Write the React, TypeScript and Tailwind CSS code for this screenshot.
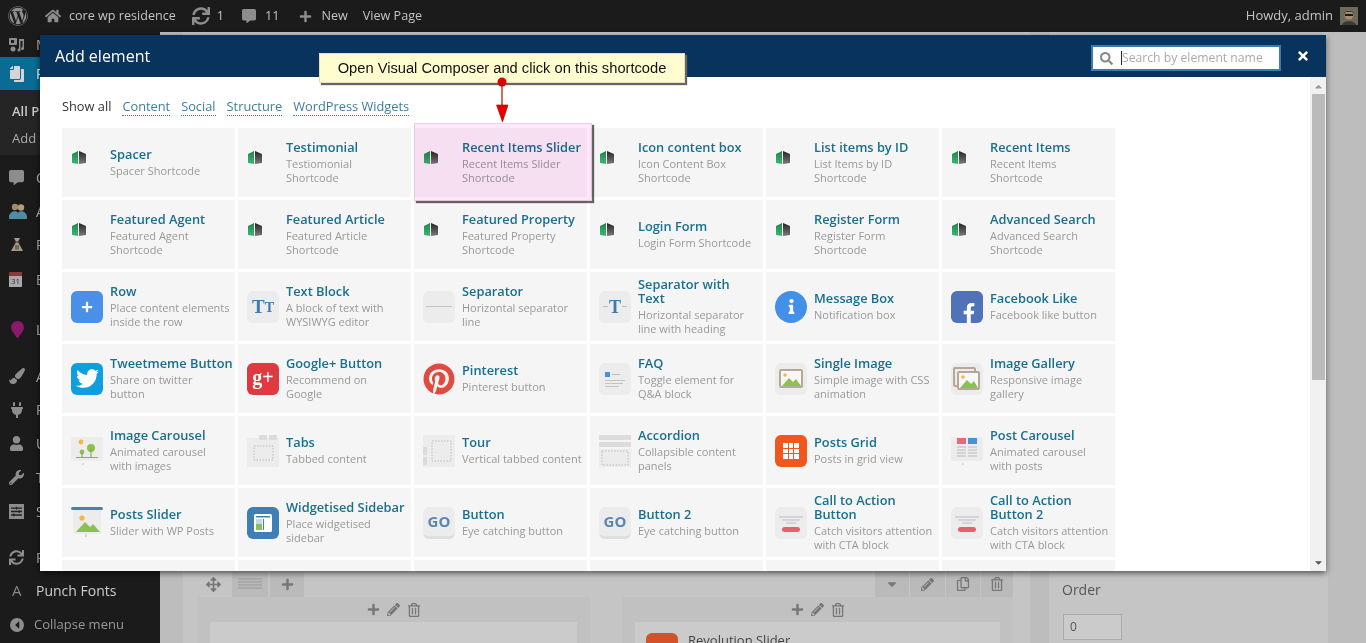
import React from 'react';
import {
  FaWordpress, FaHome, FaSync, FaPlus, FaCopy, FaCommentAlt, FaPaintBrush, FaPlug, FaUser,
  FaWrench, FaTwitter, FaPinterest, FaFacebookF, FaInfo, FaSearch, FaTimes, FaArrowsAlt,
  FaPencilAlt, FaRegTrashAlt, FaRegCopy, FaCaretDown, FaCaretLeft, FaCaretUp, FaMapMarker, FaSlidersH,
} from 'react-icons/fa';

const tile = 'w-[32px] h-[32px] rounded-[6px] flex items-center justify-center shrink-0';

const Shortcode = () => (
  <div className="w-[32px] h-[32px] shrink-0 pt-[4px]">
    <svg width="16" height="13" viewBox="0 0 16 13">
      <defs>
        <linearGradient id="sg" x1="0" y1="0" x2="0" y2="1">
          <stop offset="0" stopColor="#1a8a4a" />
          <stop offset="1" stopColor="#3fb574" />
        </linearGradient>
        <linearGradient id="sd" x1="0" y1="0" x2="0" y2="1">
          <stop offset="0" stopColor="#262626" />
          <stop offset="1" stopColor="#7a7a7a" />
        </linearGradient>
      </defs>
      <polygon points="1,3 7,0 7,13 1,12" fill="url(#sg)" />
      <polygon points="8,0 15,3 15,12 8,13" fill="url(#sd)" />
    </svg>
  </div>
);

const GreyImage = () => (
  <>
    <rect x="5" y="7" width="22" height="17" fill="#f7f7f7" stroke="#b5a898" strokeWidth="2" rx="1" />
    <circle cx="10" cy="12" r="1.8" fill="#f5b83d" />
    <polygon points="7,23 14,15 18,19 21,16 26,23" fill="#8cc152" />
  </>
);

const Svg = ({ children }: { children: React.ReactNode }) => (
  <svg width="32" height="32" viewBox="0 0 32 32">{children}</svg>
);

const icons: Record<string, React.ReactNode> = {
  code: <Shortcode />,
  row: <div className={`${tile} bg-[#4a90e9] text-white`}><FaPlus size={12} /></div>,
  text: (
    <div className={`${tile} bg-[#ececec] text-[#4079ad] font-['Liberation_Serif',serif] font-bold leading-none`}>
      <span className="text-[19px]">T</span><span className="text-[14px] mt-[3px]">T</span>
    </div>
  ),
  sep: (
    <div className={`${tile} bg-[#ececec]`}>
      <div className="w-[26px] h-px bg-[#c4c4c4]" />
    </div>
  ),
  septext: (
    <div className={`${tile} bg-[#ececec] gap-[1px]`}>
      <div className="w-[5px] h-px bg-[#bbb]" />
      <span className="text-[#4079ad] font-['Liberation_Serif',serif] font-bold text-[18px] leading-none">T</span>
      <div className="w-[5px] h-px bg-[#bbb]" />
    </div>
  ),
  message: <div className={`${tile} !rounded-full bg-[#4290e8] text-white`}><FaInfo size={15} /></div>,
  facebook: <div className={`${tile} bg-[#5072b8] text-white items-end`}><FaFacebookF size={20} className="translate-x-[2px]" /></div>,
  twitter: <div className={`${tile} bg-[#0f9fdf] text-white`}><FaTwitter size={23} /></div>,
  google: (
    <div className={`${tile} bg-[#dd3b3f] text-white font-['Liberation_Serif',serif] font-bold text-[20px] leading-none pb-[3px]`}>g+</div>
  ),
  pinterest: <div className="w-[32px] h-[32px] flex items-center justify-center shrink-0 text-[#df4b3f]"><FaPinterest size={32} /></div>,
  faq: (
    <div className={`${tile} bg-[#ececec]`}>
      <Svg>
        <rect x="6" y="9" width="5" height="5" fill="#4a90e2" />
        <rect x="13" y="11" width="8" height="1" fill="#bbb" />
        <rect x="6" y="17" width="20" height="1" fill="#c4c4c4" />
        <rect x="6" y="20" width="18" height="1" fill="#c4c4c4" />
        <rect x="6" y="23" width="14" height="1" fill="#c4c4c4" />
      </Svg>
    </div>
  ),
  image: <div className={`${tile} bg-[#ececec]`}><Svg><GreyImage /></Svg></div>,
  gallery: (
    <div className={`${tile} bg-[#ececec]`}>
      <Svg>
        <rect x="3" y="5" width="21" height="18" fill="none" stroke="#b5a898" strokeWidth="2" rx="1" />
        <rect x="7" y="9" width="21" height="17" fill="#f7f7f7" stroke="#b5a898" strokeWidth="2" rx="1" />
        <circle cx="12" cy="14" r="1.8" fill="#f5b83d" />
        <polygon points="9,25 16,17 20,21 23,18 27,25" fill="#8cc152" />
      </Svg>
    </div>
  ),
  carousel: (
    <Svg>
      <rect x="0" y="2" width="32" height="24" rx="3" fill="#ececec" />
      <circle cx="10" cy="7" r="2.4" fill="#f5b83d" />
      <circle cx="20" cy="13" r="4" fill="#8cc152" />
      <rect x="19.5" y="14" width="1" height="8" fill="#6fa93a" />
      <circle cx="11" cy="17" r="2.4" fill="#8cc152" />
      <rect x="10.5" y="18" width="1" height="4" fill="#6fa93a" />
      <rect x="5" y="22" width="22" height="1" fill="#999" />
      <circle cx="12" cy="29" r="0.8" fill="#bbb" />
    </Svg>
  ),
  tabs: (
    <Svg>
      <rect x="0" y="3" width="32" height="29" fill="#ececec" />
      <rect x="12" y="0" width="8" height="5" rx="1" fill="#dcdcdc" />
      <rect x="22" y="0" width="8" height="5" rx="1" fill="#dcdcdc" />
      <rect x="7" y="11" width="19" height="14" fill="none" stroke="#bbb" strokeDasharray="1.5 1.5" />
    </Svg>
  ),
  tour: (
    <Svg>
      <rect x="0" y="0" width="32" height="32" fill="#ececec" />
      <rect x="0" y="12" width="4" height="8" fill="#dcdcdc" />
      <rect x="0" y="22" width="4" height="8" fill="#dcdcdc" />
      <rect x="9" y="6" width="19" height="20" fill="none" stroke="#bbb" strokeDasharray="1.5 1.5" />
    </Svg>
  ),
  accordion: (
    <Svg>
      <rect x="0" y="0" width="32" height="5" fill="#dcdcdc" />
      <rect x="0" y="7" width="32" height="5" fill="#dcdcdc" />
      <rect x="0" y="14" width="32" height="18" fill="#ececec" />
      <rect x="3" y="16" width="26" height="14" fill="none" stroke="#bbb" strokeDasharray="1.5 1.5" />
    </Svg>
  ),
  grid: (
    <div className={`${tile} bg-[#f1561f]`}>
      <Svg>
        <rect x="8" y="8" width="16" height="16" fill="#fff" />
        <path d="M8 13.5h16M8 18.5h16M13.5 8v16M18.5 8v16" stroke="#f1561f" strokeWidth="1" />
      </Svg>
    </div>
  ),
  postcarousel: (
    <Svg>
      <rect x="0" y="2" width="32" height="24" rx="2" fill="#ececec" />
      <rect x="6" y="3" width="9" height="6" fill="#e8697a" />
      <rect x="17" y="3" width="9" height="6" fill="#4a90e2" />
      <path d="M6 12h9M6 15h9M6 18h9M6 21h9M17 12h9M17 15h9M17 18h9M17 21h9" stroke="#bbb" />
      <circle cx="12" cy="29" r="0.8" fill="#bbb" />
    </Svg>
  ),
  slider: (
    <Svg>
      <rect x="0" y="0" width="32" height="3" rx="1.5" fill="#4a7fb0" />
      <rect x="2" y="3" width="28" height="24" fill="#ececec" />
      <circle cx="11" cy="11" r="2.6" fill="#f5b83d" />
      <polygon points="5,25 14,15 19,20 22,17 29,25" fill="#8cc152" />
      <path d="M15 27v3" stroke="#bbb" />
    </Svg>
  ),
  widget: (
    <div className={`${tile} bg-[#3f7fb5]`}>
      <Svg>
        <rect x="7" y="7" width="18" height="18" rx="1.5" fill="#fff" />
        <rect x="9" y="17" width="6" height="6" fill="#8cc152" />
        <rect x="9" y="12" width="6" height="5" fill="#3f7fb5" opacity="0.3" />
        <rect x="9" y="9" width="14" height="1.5" fill="#3f7fb5" />
        <rect x="16" y="12" width="1" height="11" fill="#3f7fb5" />
      </Svg>
    </div>
  ),
  go: (
    <div className={`${tile} bg-[#ececec] border-b-[3px] border-[#dedede] text-[#5a86b3] font-['Open_Sans',sans-serif] font-bold text-[15px]`}>GO</div>
  ),
  cta: (
    <div className={`${tile} bg-[#ececec]`}>
      <Svg>
        <path d="M4 10h24M7 13h18M11 16h10" stroke="#bbb" />
        <rect x="7" y="20" width="18" height="5" rx="2.5" fill="#e8606a" />
      </Svg>
    </div>
  ),
};

const items = [
  ['code', 'Spacer', 'Spacer Shortcode'],
  ['code', 'Testimonial', 'Testiomonial\nShortcode'],
  ['code', 'Recent Items Slider', 'Recent Items Slider\nShortcode'],
  ['code', 'Icon content box', 'Icon Content Box\nShortcode'],
  ['code', 'List items by ID', 'List Items by ID\nShortcode'],
  ['code', 'Recent Items', 'Recent Items\nShortcode'],
  ['code', 'Featured Agent', 'Featured Agent\nShortcode'],
  ['code', 'Featured Article', 'Featured Article\nShortcode'],
  ['code', 'Featured Property', 'Featured Property\nShortcode'],
  ['code', 'Login Form', 'Login Form Shortcode'],
  ['code', 'Register Form', 'Register Form\nShortcode'],
  ['code', 'Advanced Search', 'Advanced Search\nShortcode'],
  ['row', 'Row', 'Place content elements\ninside the row'],
  ['text', 'Text Block', 'A block of text with\nWYSIWYG editor'],
  ['sep', 'Separator', 'Horizontal separator\nline'],
  ['septext', 'Separator with\nText', 'Horizontal separator\nline with heading'],
  ['message', 'Message Box', 'Notification box'],
  ['facebook', 'Facebook Like', 'Facebook like button'],
  ['twitter', 'Tweetmeme Button', 'Share on twitter\nbutton'],
  ['google', 'Google+ Button', 'Recommend on\nGoogle'],
  ['pinterest', 'Pinterest', 'Pinterest button'],
  ['faq', 'FAQ', 'Toggle element for\nQ&A block'],
  ['image', 'Single Image', 'Simple image with CSS\nanimation'],
  ['gallery', 'Image Gallery', 'Responsive image\ngallery'],
  ['carousel', 'Image Carousel', 'Animated carousel\nwith images'],
  ['tabs', 'Tabs', 'Tabbed content'],
  ['tour', 'Tour', 'Vertical tabbed content'],
  ['accordion', 'Accordion', 'Collapsible content\npanels'],
  ['grid', 'Posts Grid', 'Posts in grid view'],
  ['postcarousel', 'Post Carousel', 'Animated carousel\nwith posts'],
  ['slider', 'Posts Slider', 'Slider with WP Posts'],
  ['widget', 'Widgetised Sidebar', 'Place widgetised\nsidebar'],
  ['go', 'Button', 'Eye catching button'],
  ['go', 'Button 2', 'Eye catching button'],
  ['cta', 'Call to Action\nButton', 'Catch visitors attention\nwith CTA block'],
  ['cta', 'Call to Action\nButton 2', 'Catch visitors attention\nwith CTA block'],
];

const ElementCard = ({ icon, title, desc }: { icon: string; title: string; desc: string }) => (
  <div className="h-[69px] bg-[#f5f5f5] flex items-center pl-[9px] gap-[7px]">
    {icons[icon]}
    <div className="min-w-0">
      <div className="text-[12.8px] leading-[14px] font-semibold text-[#17708f] whitespace-pre-line">{title}</div>
      <div className="mt-[3px] text-[11px] leading-[14px] text-[#999] whitespace-pre-line">{desc}</div>
    </div>
  </div>
);

const SideIcon = ({ children }: { children: React.ReactNode }) => (
  <div className="w-[36px] pl-[9px] shrink-0 flex items-center text-[#8d8d8d]">{children}</div>
);

const sideItems: { h: string; label: React.ReactNode; icon: React.ReactNode }[] = [
  { h: 'h-[34px]', label: 'Comments', icon: <FaCommentAlt size={15} /> },
  {
    h: 'h-[34px]',
    label: 'Agents',
    icon: (
      <svg width="18" height="16" viewBox="0 0 18 16">
        <circle cx="6" cy="4" r="3.2" fill="#a08a6a" />
        <circle cx="12" cy="4.5" r="3.2" fill="#b59c78" />
        <path d="M0 14c0-6 8-7 9-4 1-3 9-2 9 4v2H0z" fill="#4f8ba3" />
      </svg>
    ),
  },
  {
    h: 'h-[33px]',
    label: 'Properties',
    icon: (
      <svg width="16" height="16" viewBox="0 0 16 16">
        <path d="M5 1h6l-2 4 5 9H2l5-9z" fill="#a89a84" />
        <path d="M5 5h6" stroke="#333" />
        <path d="M6 9h4M6 11h4M7 8v5M9 8v5" stroke="#444" strokeWidth="0.7" />
      </svg>
    ),
  },
  {
    h: 'h-[36px]',
    label: 'Bookings',
    icon: (
      <div className="w-[13px] h-[15px] bg-[#aaa] border-t-[4px] border-[#8b3a3a] text-[#333] text-[8px] leading-[10px] text-center">31</div>
    ),
  },
  { h: 'h-[34px] mt-[15px]', label: 'Locations', icon: <FaMapMarker size={17} className="text-[#8c1a6a]" /> },
  { h: 'h-[34px] mt-[13px]', label: 'Appearance', icon: <FaPaintBrush size={16} /> },
  { h: 'h-[33px]', label: 'Plugins', icon: <FaPlug size={16} /> },
  { h: 'h-[34px]', label: 'Users', icon: <FaUser size={15} /> },
  { h: 'h-[34px]', label: 'Tools', icon: <FaWrench size={15} /> },
  { h: 'h-[34px]', label: 'Settings', icon: <div className="w-[15px] h-[15px] bg-[#8d8d8d] text-[#222] flex items-center justify-center"><FaSlidersH size={11} /></div> },
  { h: 'h-[34px] mt-[12px]', label: 'Revolution', icon: <FaSync size={15} /> },
];

const Avatar = () => (
  <svg width="18" height="18" viewBox="0 0 18 18">
    <rect width="18" height="18" fill="#6b6a5c" />
    <circle cx="9" cy="8" r="4.5" fill="#a88a70" />
    <path d="M4 7c0-4 10-4 10 0l-2-2H6z" fill="#222" />
    <rect x="5" y="7" width="8" height="2" fill="#1a1a1a" />
    <path d="M2 18c1-5 13-5 14 0z" fill="#3a3a2f" />
  </svg>
);

const ToolCell = ({ children, w }: { children: React.ReactNode; w: string }) => (
  <div className={`${w} h-[26px] bg-[#bababa] flex items-center justify-center text-[#777]`}>{children}</div>
);

const ColumnActions = () => (
  <div className="h-[25px] flex items-center justify-center gap-[7px] text-[#777]">
    <FaPlus size={13} />
    <FaPencilAlt size={13} />
    <FaRegTrashAlt size={14} />
  </div>
);

export default function App() {
  return (
    <div className="relative w-[1366px] h-[643px] overflow-hidden bg-[#bdbdbd] font-['Open_Sans',sans-serif]">
      {/* Admin bar */}
      <div className="h-[32px] bg-[#1b1b1b] flex items-center justify-between text-[12.6px] text-[#c4c4c4]">
        <div className="flex items-center">
          <FaWordpress size={20} className="ml-[8px] text-[#8d8d8d]" />
          <FaHome size={16} className="ml-[17px] text-[#8d8d8d]" />
          <span className="ml-[8px]">core wp residence</span>
          <FaSync size={18} className="ml-[16px] text-[#8d8d8d]" />
          <span className="ml-[7px]">1</span>
          <FaCommentAlt size={14} className="ml-[18px] text-[#8d8d8d]" />
          <span className="ml-[9px]">11</span>
          <FaPlus size={13} className="ml-[20px] text-[#8d8d8d]" />
          <span className="ml-[9px]">New</span>
          <span className="ml-[15px]">View Page</span>
        </div>
        <div className="flex items-center gap-[7px] pr-[8px] text-[13px]">
          <span>Howdy, admin</span>
          <Avatar />
        </div>
      </div>

      <div className="flex h-[611px]">
        {/* Sidebar */}
        <div className="w-[160px] shrink-0 bg-[#1b1b1b] text-[14px] text-[#bbb] flex flex-col">
          <div className="h-[25px] flex items-center">
            <SideIcon>
              <svg width="16" height="16" viewBox="0 0 16 16" fill="#8d8d8d">
                <rect x="0" y="1" width="8" height="7" rx="1" />
                <rect x="2" y="3" width="3" height="3" fill="#1b1b1b" />
                <path d="M10 2h5v9.5a1.5 1.5 0 1 1-1.5-1.5V4h-2v9a1.5 1.5 0 1 1-1.5-1.5z" />
                <circle cx="4" cy="12" r="2.5" />
              </svg>
            </SideIcon>
            <span>Media</span>
          </div>
          <div className="h-[33px] bg-[#0a6c94] flex items-center text-white">
            <SideIcon><FaCopy size={16} className="text-[#d5d5d5] -scale-x-100" /></SideIcon>
            <span>Pages</span>
          </div>
          <div className="h-[65px] bg-[#252525] pl-[12px] text-[13px] flex flex-col justify-end pb-[7px] gap-[7px]">
            <span className="font-semibold text-[#c8c8c8]">All Pages</span>
            <span className="text-[#aaa]">Add New</span>
          </div>
          <div className="h-[5px]" />
          {sideItems.map((item, i) => (
            <div key={i} className={`${item.h} flex items-center`}>
              <SideIcon>{item.icon}</SideIcon>
              <span>{item.label}</span>
            </div>
          ))}
          <div className="h-[33px] flex items-center">
            <div className="w-[36px] pl-[12px] text-[#888] text-[15px]">A</div>
            <span className="text-[#ccc]">Punch Fonts</span>
          </div>
          <div className="h-[36px] flex items-center text-[13px] text-[#999]">
            <div className="ml-[10px] w-[14px] h-[14px] rounded-full bg-[#8d8d8d] flex items-center justify-center text-[#1b1b1b]">
              <FaCaretLeft size={12} />
            </div>
            <span className="ml-[10px]">Collapse menu</span>
          </div>
        </div>

        {/* Page behind the dialog */}
        <div className="flex-1 flex pl-[23px] text-[#555]">
          <div className="w-[847px] bg-[#c5c5c5] pl-[14px] pr-[17px] flex flex-col justify-end">
            <div className="flex items-end justify-between">
              <div className="flex items-center gap-[2px]">
                <div className="w-[33px] flex justify-center text-[#777]"><FaArrowsAlt size={15} /></div>
                <ToolCell w="w-[36px]">
                  <svg width="24" height="12" viewBox="0 0 24 12" stroke="#999"><path d="M0 1h24M0 4h24M0 7h24M0 10h24" /></svg>
                </ToolCell>
                <ToolCell w="w-[34px]"><FaPlus size={13} /></ToolCell>
              </div>
              <div className="flex items-center gap-[1px]">
                <ToolCell w="w-[34px]"><FaCaretDown size={14} /></ToolCell>
                <ToolCell w="w-[35px]"><FaPencilAlt size={13} /></ToolCell>
                <ToolCell w="w-[34px]"><FaRegCopy size={14} /></ToolCell>
                <ToolCell w="w-[32px]"><FaRegTrashAlt size={14} /></ToolCell>
              </div>
            </div>
            <div className="flex justify-between h-[46px]">
              <div className="w-[393px] bg-[#c1c1c1] px-[13px]">
                <ColumnActions />
                <div className="h-[21px] bg-[#cbcbcb]" />
              </div>
              <div className="w-[391px] bg-[#c1c1c1] px-[13px]">
                <ColumnActions />
                <div className="h-[21px] bg-[#cbcbcb] pl-[11px] pt-[11px] flex gap-[10px] overflow-hidden">
                  <div className="w-[32px] h-[32px] rounded-[6px] bg-[#d0532a] shrink-0" />
                  <span className="text-[13px] leading-[14px] text-[#444]">Revolution Slider</span>
                </div>
              </div>
            </div>
          </div>
          <div className="ml-[19px] w-[279px] bg-[#c5c5c5] pl-[13px] pt-[548px] text-[14px]">
            <div className="leading-[20px]">Order</div>
            <div className="mt-[14px] ml-[1px] w-[59px] h-[26px] bg-[#cbcbcb] border border-[#aaa] pl-[6px] text-[12px] leading-[24px]">0</div>
          </div>
        </div>
      </div>

      {/* Add element dialog */}
      <div className="absolute left-[40px] top-[35px] w-[1286px] h-[536px] bg-white shadow-[0_2px_6px_rgba(0,0,0,0.6)] flex flex-col">
        <div className="h-[42px] shrink-0 bg-[#07335c] flex items-center justify-between pl-[15px] pr-[16px]">
          <span className="text-[16px] text-white">Add element</span>
          <div className="flex items-center gap-[15px]">
            <div className="mt-[4px] w-[190px] h-[26px] bg-white border-2 border-[#3b7cb0] flex items-center">
              <FaSearch size={13} className="ml-[7px] text-[#888]" />
              <div className="ml-[8px] w-px h-[14px] bg-[#222]" />
              <span className="text-[12.2px] text-[#aaa]">Search by element name</span>
            </div>
            <FaTimes size={14} className="text-white" />
          </div>
        </div>
        <div className="flex-1 flex min-h-0">
          <div className="flex-1 pl-[22px] pt-[21px] overflow-hidden">
            <div className="h-[30px] flex items-start gap-[11px] text-[12.8px] leading-[17px]">
              <span className="text-[#333]">Show all</span>
              {['Content', 'Social', 'Structure', 'WordPress Widgets'].map((t) => (
                <span key={t} className="text-[#3f7d9c] border-b border-dotted border-[#3f7d9c]">{t}</span>
              ))}
            </div>
            <div className="grid grid-cols-[repeat(6,173px)] auto-rows-[69px] gap-[3px]">
              {items.map(([icon, title, desc]) => (
                <ElementCard key={title} icon={icon} title={title} desc={desc} />
              ))}
              {[0, 1, 2, 3, 4, 5].map((i) => (
                <div key={i} className="h-[69px] bg-[#f5f5f5]" />
              ))}
            </div>
          </div>
          <div className="w-[16px] shrink-0 bg-[#f1f1f1] flex flex-col items-center justify-between">
            <div className="w-full flex flex-col items-center">
              <FaCaretUp size={11} className="text-[#999] mt-[4px] mb-[2px] h-[11px]" />
              <div className="w-[13px] h-[286px] bg-[#bbb]" />
            </div>
            <FaCaretDown size={11} className="text-[#555] mb-[3px]" />
          </div>
        </div>
      </div>

      {/* Screenshot annotations */}
      <div className="absolute left-[414px] top-[123px] w-[178px] h-[78px] bg-[#ffe8fb] mix-blend-multiply border border-[#e8cfe2] shadow-[2px_2px_1px_#666]" />
      <div className="absolute left-[319px] top-[53px] w-[366px] h-[30px] bg-[#fffdcf] border border-[#e4e2b0] shadow-[2px_2px_1px_#666] flex items-center justify-center font-['Liberation_Sans',sans-serif] text-[14.7px] text-[#111]">
        Open Visual Composer and click on this shortcode
      </div>
      <svg className="absolute left-[494px] top-[76px]" width="18" height="48" viewBox="0 0 18 48">
        <circle cx="8" cy="6" r="4.5" fill="#e00000" />
        <path d="M8 6v24" stroke="#c00000" strokeWidth="1.2" />
        <polygon points="2.5,29 14,29 8.5,46" fill="#e60000" stroke="#a00000" strokeWidth="0.6" />
      </svg>
    </div>
  );
}
